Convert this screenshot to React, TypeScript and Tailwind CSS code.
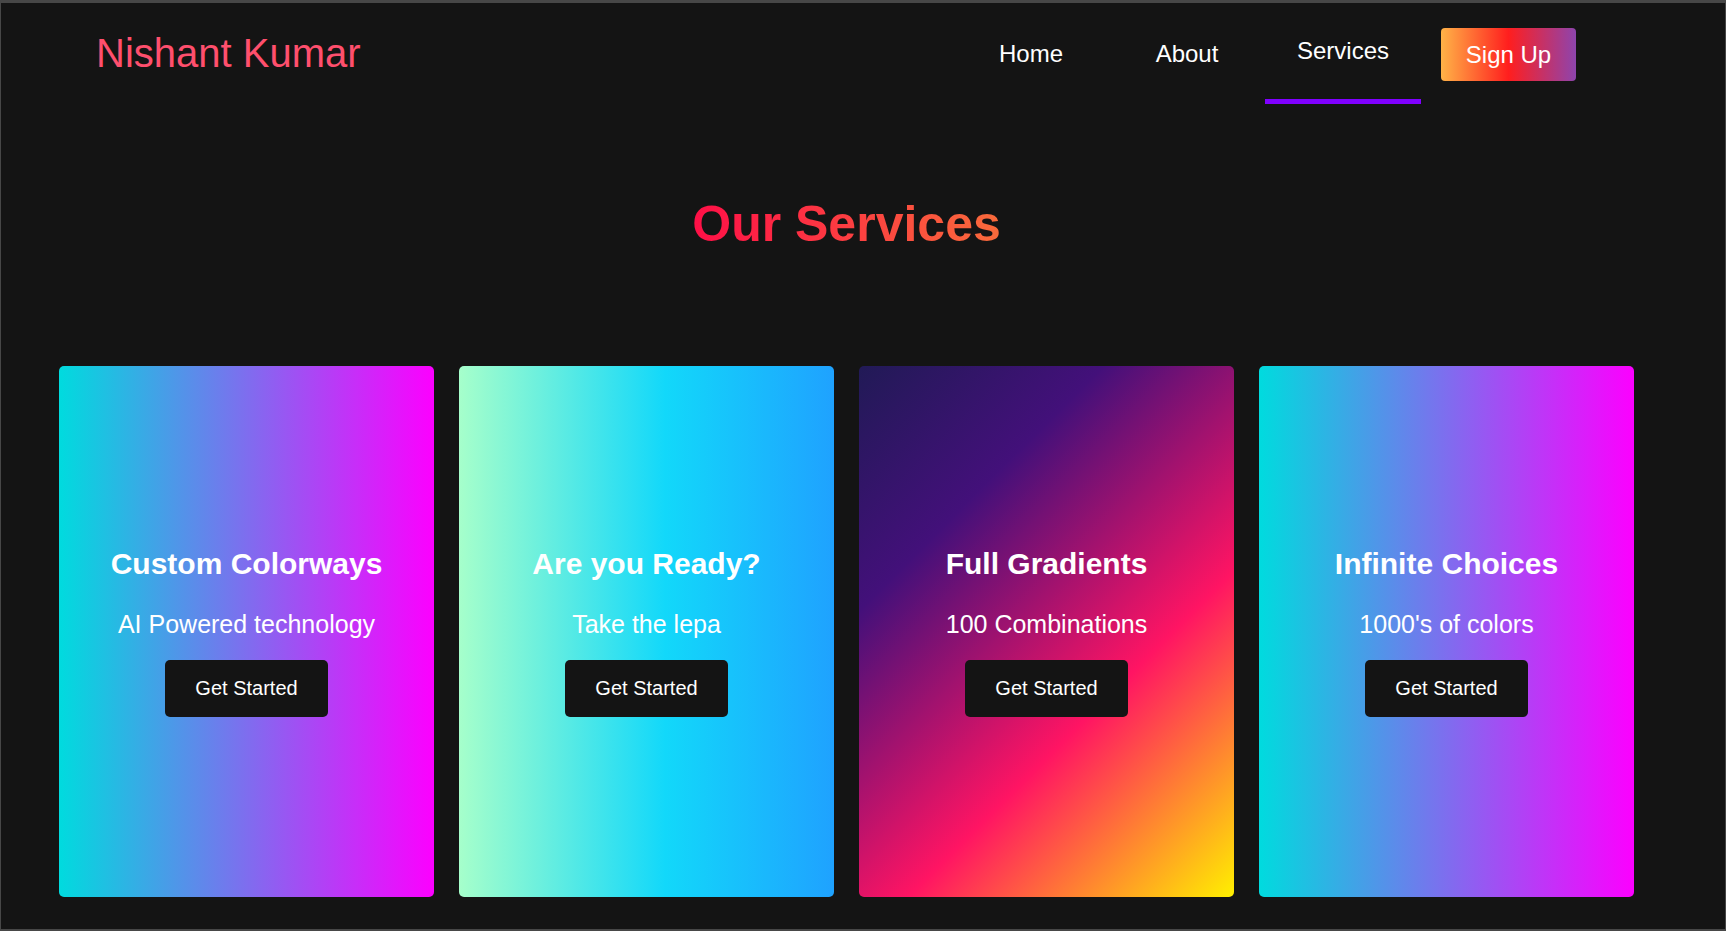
const cards = [
  {
    title: "Custom Colorways",
    text: "AI Powered technology",
    bg: "bg-[linear-gradient(90deg,#00dbde,#fc00ff)]",
  },
  {
    title: "Are you Ready?",
    text: "Take the lepa",
    bg: "bg-[linear-gradient(90deg,#a6ffcb,#12d8fa_55%,#1fa2ff)]",
  },
  {
    title: "Full Gradients",
    text: "100 Combinations",
    bg: "bg-[linear-gradient(135deg,#211a56_0%,#43107a_27%,#ff1463_64%,#fff000_100%)]",
  },
  {
    title: "Infinite Choices",
    text: "1000's of colors",
    bg: "bg-[linear-gradient(90deg,#00dbde,#fc00ff)]",
  },
];

const links = ["Home", "About", "Services"];

const ServiceCard = ({ title, text, bg }: { title: string; text: string; bg: string }) => {
  return (
    <div className={`w-[375px] h-[531px] rounded-[5px] flex flex-col items-center justify-center text-white ${bg}`}>
      <h2 className="text-[30px] font-bold leading-[34px]">{title}</h2>
      <p className="mt-[29px] text-[25px] leading-[29px]">{text}</p>
      <button className="mt-[21px] w-[163px] h-[57px] rounded-[5px] bg-[#141414] text-[20px] leading-[23px] text-white">
        Get Started
      </button>
    </div>
  );
};

export default function App() {
  return (
    <div className="h-[931px] overflow-hidden bg-[#141414] border-t-[3px] border-x border-b-2 border-[#474747] font-['Liberation_Sans',Arial,sans-serif]">
      <header className="h-[101px] flex items-center justify-between pl-[95px] pr-[149px]">
        <div className="text-[40px] leading-[45px] text-[#ff4f6d]">Nishant Kumar</div>
        <nav className="flex items-center">
          {links.map((l) => (
            <a
              key={l}
              className={`w-[156px] py-[34px] text-center text-[24px] leading-[28px] text-white ${
                l === "Services" ? "border-b-[5px] border-[#8000ff]" : ""
              }`}
            >
              {l}
            </a>
          ))}
          <button className="ml-[20px] mt-[2px] w-[135px] h-[53px] rounded-[4px] bg-[linear-gradient(90deg,#ffb347,#ff1e1e_50%,#8e44ad)] text-[24px] leading-[28px] text-white">
            Sign Up
          </button>
        </nav>
      </header>

      <div className="pl-[58px] pr-[91px]">
        <div className="mt-[91px] text-center">
          <h1 className="inline-block text-[50px] leading-[58px] font-bold bg-[linear-gradient(90deg,#ff0f47,#f96b3b)] bg-clip-text text-transparent">
            Our Services
          </h1>
        </div>

        <div className="mt-[113px] flex gap-[25px]">
          {cards.map((c) => (
            <ServiceCard key={c.title} {...c} />
          ))}
        </div>
      </div>
    </div>
  );
}
